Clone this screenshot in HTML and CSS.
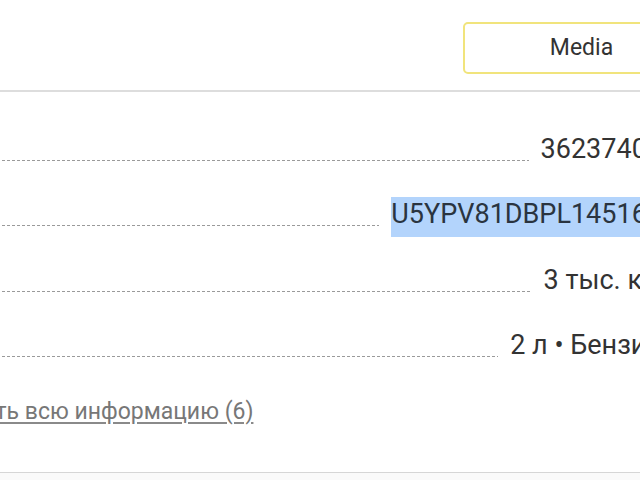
FILE: index.html
```html
<!DOCTYPE html>
<html lang="ru">
<head>
<meta charset="utf-8">
<title>Характеристики</title>
<link rel="stylesheet" href="styles.css">
</head>
<body>
<div class="viewport">
  <div class="page">
    <header class="header">
      <button class="media-btn" type="button">Media</button>
    </header>
    <section class="specs">
      <div class="rows">
        <div class="row"><span class="dots"></span><span class="val">36237400</span></div>
        <div class="row"><span class="dots"></span><span class="val val-selected">U5YPV81DBPL145166</span></div>
        <div class="row"><span class="dots"></span><span class="val">3 тыс. км</span></div>
        <div class="row"><span class="dots"></span><span class="val">2 л • Бензин</span></div>
      </div>
      <div class="more"><a class="more-link" href="#">Показать всю информацию (6)</a></div>
    </section>
  </div>
</div>
</body>
</html>
```

FILE: styles.css
```css
html, body {
  margin: 0;
  padding: 0;
  background: #ffffff;
}
body {
  width: 640px;
  height: 480px;
  overflow: hidden;
  font-family: Roboto, "Noto Sans", "Liberation Sans", sans-serif;
  color: #333333;
}
.viewport {
  width: 640px;
  height: 480px;
  overflow: hidden;
  background: #fafafa;
}
.page {
  margin-left: -83px;
  width: 783px;
  background: #ffffff;
}
.header {
  height: 92px;
  box-sizing: border-box;
  padding-top: 22px;
  border-bottom: 2px solid #dddddd;
  display: flex;
  justify-content: flex-end;
  align-items: flex-start;
}
.media-btn {
  width: 237px;
  height: 52px;
  box-sizing: border-box;
  border: 2px solid #f1e47c;
  border-radius: 5px;
  background: #ffffff;
  font-family: Roboto, "Noto Sans", "Liberation Sans", sans-serif;
  font-size: 23px;
  color: #333333;
  padding: 0 0 2px 0;
}
.specs {
  padding-top: 40px;
  height: 381px;
  box-sizing: border-box;
  border-bottom: 1px solid #d6d6d6;
}
.rows {
  display: flex;
  flex-direction: column;
  gap: 25.33px;
  padding-right: 38px;
}
.row {
  display: flex;
  align-items: flex-end;
  height: 40px;
}
.dots {
  flex: 1;
  height: 1px;
  margin-bottom: 11px;
  background-image: linear-gradient(to right, #9a9a9a 60%, transparent 60%);
  background-size: 5px 1px;
  background-repeat: repeat-x;
}
.val {
  margin-left: 12px;
  height: 40px;
  box-sizing: border-box;
  padding-bottom: 6px;
  font-size: 27px;
  line-height: 34px;
  white-space: nowrap;
  color: #333333;
}
.val-selected {
  background: #b3d4fc;
  color: #2a3440;
}
.more {
  margin-top: 29px;
  line-height: 30px;
}
.more-link {
  font-size: 23px;
  color: #777777;
  text-decoration: underline;
  text-decoration-color: #8a8a8a;
  text-underline-offset: 3px;
}
```
